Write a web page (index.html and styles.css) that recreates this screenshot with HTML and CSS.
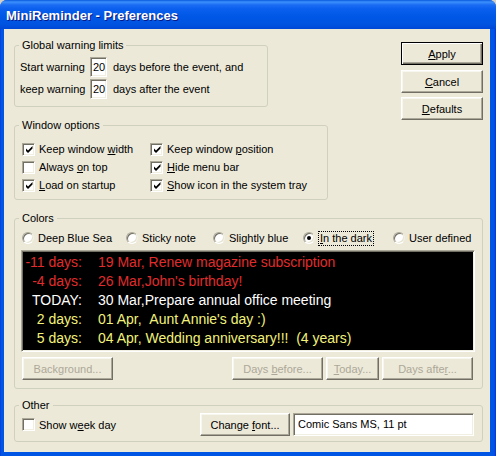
FILE: index.html
```html
<!DOCTYPE html>
<html>
<head>
<meta charset="utf-8">
<title>MiniReminder - Preferences</title>
<link rel="stylesheet" href="styles.css">
</head>
<body>
<div class="window">
  <div class="titlebar"><span class="title">MiniReminder - Preferences</span></div>
  <div class="client">
    <fieldset class="group g-global">
      <legend>Global warning limits</legend>
      <div class="global-body">
        <div class="limit-row"><span class="limit-label">Start warning</span><span class="edit num">20</span><span class="limit-text">days before the event, and</span></div>
        <div class="limit-row"><span class="limit-label">keep warning</span><span class="edit num">20</span><span class="limit-text">days after the event</span></div>
      </div>
    </fieldset>

    <div class="btn-col">
      <button class="btn btn-main default"><span><u>A</u>pply</span></button>
      <button class="btn btn-main"><span><u>C</u>ancel</span></button>
      <button class="btn btn-main"><span><u>D</u>efaults</span></button>
    </div>

    <fieldset class="group g-window">
      <legend>Window options</legend>
      <div class="options-grid">
        <label class="check-item"><span class="checkbox checked"><svg viewBox="0 0 9 9" width="9" height="9"><path d="M1 3.5 L3 5.5 L7.5 1 L7.5 3.5 L3 8 L1 6 Z" fill="#000"/></svg></span><span>Keep window <u>w</u>idth</span></label>
        <label class="check-item"><span class="checkbox checked"><svg viewBox="0 0 9 9" width="9" height="9"><path d="M1 3.5 L3 5.5 L7.5 1 L7.5 3.5 L3 8 L1 6 Z" fill="#000"/></svg></span><span>Keep window <u>p</u>osition</span></label>
        <label class="check-item"><span class="checkbox"></span><span>Always <u>o</u>n top</span></label>
        <label class="check-item"><span class="checkbox checked"><svg viewBox="0 0 9 9" width="9" height="9"><path d="M1 3.5 L3 5.5 L7.5 1 L7.5 3.5 L3 8 L1 6 Z" fill="#000"/></svg></span><span><u>H</u>ide menu bar</span></label>
        <label class="check-item"><span class="checkbox checked"><svg viewBox="0 0 9 9" width="9" height="9"><path d="M1 3.5 L3 5.5 L7.5 1 L7.5 3.5 L3 8 L1 6 Z" fill="#000"/></svg></span><span><u>L</u>oad on startup</span></label>
        <label class="check-item"><span class="checkbox checked"><svg viewBox="0 0 9 9" width="9" height="9"><path d="M1 3.5 L3 5.5 L7.5 1 L7.5 3.5 L3 8 L1 6 Z" fill="#000"/></svg></span><span><u>S</u>how icon in the system tray</span></label>
      </div>
    </fieldset>

    <fieldset class="group g-colors">
      <legend>Colors</legend>
      <div class="colors-body">
        <div class="radio-row">
          <label class="radio-item"><span class="radio"></span><span>Deep Blue Sea</span></label>
          <label class="radio-item"><span class="radio"></span><span>Sticky note</span></label>
          <label class="radio-item"><span class="radio"></span><span>Slightly blue</span></label>
          <label class="radio-item"><span class="radio selected"><span class="dot"></span></span><span class="focus"><u>I</u>n the dark</span></label>
          <label class="radio-item"><span class="radio"></span><span>User defined</span></label>
        </div>
        <div class="preview">
          <div class="pv-line past"><span class="pv-when">-11 days:</span><span>19 Mar, Renew magazine subscription</span></div>
          <div class="pv-line past"><span class="pv-when">-4 days:</span><span>26 Mar,John's birthday!</span></div>
          <div class="pv-line today"><span class="pv-when">TODAY:</span><span>30 Mar,Prepare annual office meeting</span></div>
          <div class="pv-line future"><span class="pv-when">2 days:</span><span>01 Apr, &nbsp;Aunt Annie's day :)</span></div>
          <div class="pv-line future"><span class="pv-when">5 days:</span><span>04 Apr, Wedding anniversary!!! &nbsp;(4 years)</span></div>
          <div class="pv-line later"><span class="pv-when">14 days:</span><span>13 Apr, Dentist appointment</span></div>
        </div>
        <div class="btn-row">
          <button class="btn disabled w-bg"><span>Background...</span></button>
          <span class="spacer"></span>
          <button class="btn disabled w-days"><span>Days <u>b</u>efore...</span></button>
          <button class="btn disabled w-today"><span><u>T</u>oday...</span></button>
          <button class="btn disabled w-days"><span>Days afte<u>r</u>...</span></button>
        </div>
      </div>
    </fieldset>

    <fieldset class="group g-other">
      <legend>Other</legend>
      <div class="other-body">
        <label class="check-item"><span class="checkbox"></span><span>Show w<u>e</u>ek day</span></label>
        <span class="spacer"></span>
        <button class="btn w-font"><span>Change <u>f</u>ont...</span></button>
        <span class="edit font-field">Comic Sans MS, 11 pt</span>
      </div>
    </fieldset>
  </div>
</div>
</body>
</html>
```

FILE: styles.css
```css
* { box-sizing: border-box; }

html, body {
  margin: 0;
  padding: 0;
}

body {
  width: 496px;
  height: 456px;
  overflow: hidden;
  background: #d4d0c8;
  font-family: "Liberation Sans", Arial, sans-serif;
  font-size: 11px;
  color: #000;
}

.window {
  width: 496px;
  height: 456px;
  display: flex;
  flex-direction: column;
  background: linear-gradient(to right, #0831d9 0, #0055e5 1px, #0055e5 calc(100% - 2px), #0831d9 100%);
  border-radius: 7px 7px 0 0;
  overflow: hidden;
}

.titlebar {
  flex: none;
  height: 29px;
  display: flex;
  align-items: center;
  padding: 2px 0 0 6px;
  background: linear-gradient(to bottom, #0a5ae0 0, #3d90fb 2px, #1a6cf3 5px, #0b5fee 9px, #0058e6 16px, #0054e0 24px, #0048d6 29px);
}

.title {
  font-family: "Liberation Sans", Arial, sans-serif;
  font-weight: bold;
  font-size: 13px;
  color: #fff;
  text-shadow: 1px 1px #0a1883;
}

.client {
  flex: 1;
  margin: 0 6px 4px 4px;
  padding: 10px 7px 0 10px;
  background: #ece9d8;
  display: grid;
  grid-template-columns: 1fr 82px;
  grid-template-rows: auto auto auto auto 1fr;
  align-items: start;
}

/* group boxes */
.group {
  margin: 0;
  padding: 0;
  min-width: 0;
  border: 1px solid #d0d0bf;
  border-radius: 3px;
}

.group legend {
  margin-left: 4px;
  padding: 0 3px;
  font-size: 11px;
  line-height: 12px;
  color: #000;
}

.g-global {
  grid-column: 1;
  grid-row: 1;
  width: 254px;
}

.global-body {
  padding: 6px 0 7px 5px;
}

.limit-row {
  display: flex;
  align-items: center;
  height: 20px;
}

.limit-row + .limit-row {
  margin-top: 2px;
}

.limit-label {
  width: 70px;
}

.limit-text {
  margin-left: 6px;
}

.edit {
  display: block;
  background: #fff;
  border: 1px solid;
  border-color: #aca899 #fff #fff #aca899;
  box-shadow: inset 1px 1px #716f64, inset -1px -1px #f1efe2;
}

.num {
  width: 17px;
  height: 20px;
  padding-left: 2px;
  line-height: 18px;
}

/* buttons */
.btn {
  display: flex;
  align-items: center;
  justify-content: center;
  height: 23px;
  padding: 0;
  margin: 0;
  background: #ece9d8;
  border: 1px solid;
  border-color: #fff #716f64 #716f64 #fff;
  box-shadow: inset -1px -1px #aca899, inset 1px 1px #f7f6ef;
  font-family: "Liberation Sans", Arial, sans-serif;
  font-size: 11px;
  color: #000;
  white-space: nowrap;
}

.btn.default {
  border-color: #000;
  box-shadow: inset 1px 1px #fff, inset -1px -1px #716f64, inset -2px -2px #aca899;
}

.btn.disabled {
  color: #aca899;
}

.btn-col {
  grid-column: 2;
  grid-row: 1 / span 2;
  margin-top: 3px;
  display: flex;
  flex-direction: column;
}

.btn-main {
  width: 82px;
}

.btn-main + .btn-main {
  margin-top: 5px;
}

.btn-main:last-child {
  margin-top: 4px;
}

/* window options */
.g-window {
  grid-column: 1;
  grid-row: 2;
  width: 314px;
  margin-top: 12px;
}

.options-grid {
  display: grid;
  grid-template-columns: 128px auto;
  grid-auto-rows: 18px;
  padding: 9px 0 5px 7px;
}

.check-item {
  display: flex;
  align-items: center;
  white-space: nowrap;
}

.checkbox {
  flex: none;
  width: 13px;
  height: 13px;
  margin-right: 4px;
  display: flex;
  align-items: center;
  justify-content: center;
  background: #fff;
  border: 1px solid;
  border-color: #aca899 #fff #fff #aca899;
  box-shadow: inset 1px 1px #716f64, inset -1px -1px #f1efe2;
}

.checkbox svg {
  display: block;
  margin: 1px 0 0 1px;
}

/* colors */
.g-colors {
  grid-column: 1 / span 2;
  grid-row: 3;
  margin-top: 12px;
}

.colors-body {
  padding: 6px 7px 8px 6px;
}

.radio-row {
  display: grid;
  grid-template-columns: 104px 87px 90px 90px auto;
  height: 16px;
  align-items: center;
  padding-left: 1px;
}

.radio-item {
  display: flex;
  align-items: center;
  white-space: nowrap;
}

.radio {
  flex: none;
  position: relative;
  width: 12px;
  height: 12px;
  margin-right: 4px;
  border-radius: 50%;
  background: #fff;
  border: 1px solid;
  border-color: #aca899 #f1efe2 #fff #aca899;
  box-shadow: inset 1px 1px #716f64, inset -1px -1px #e6e3d3;
}

.radio .dot {
  position: absolute;
  left: 3px;
  top: 3px;
  width: 4px;
  height: 4px;
  border-radius: 50%;
  background: #000;
}

.focus {
  border: 1px dotted #000;
  padding: 0 1px;
  line-height: 13px;
  margin-left: -1px;
}

.preview {
  margin-top: 4px;
  width: 454px;
  height: 102px;
  overflow: hidden;
  background: #000;
  border: 1px solid;
  border-color: #aca899 #fff #fff #aca899;
  box-shadow: inset 1px 1px #716f64, inset -1px -1px #f1efe2;
  padding: 2px 0 0 1px;
  font-family: "Liberation Sans", Arial, sans-serif;
  font-size: 14px;
}

.pv-line {
  display: grid;
  grid-template-columns: 59px auto;
  column-gap: 16px;
  line-height: 19px;
  white-space: nowrap;
}

.pv-when {
  text-align: right;
}

.past { color: #e02c2c; }
.today { color: #fff; }
.future { color: #f2f27a; }
.later { color: #c8c8c8; }

.btn-row {
  display: flex;
  margin-top: 5px;
  padding: 0 2px 0 1px;
}

.spacer {
  flex: 1;
}

.w-bg { width: 91px; }
.w-days { width: 91px; }
.w-today { width: 53px; margin: 0 3px; }

/* other */
.g-other {
  grid-column: 1 / span 2;
  grid-row: 4;
  margin-top: 10px;
}

.other-body {
  display: flex;
  align-items: center;
  padding: 2px 8px 5px 7px;
}

.w-font {
  width: 90px;
}

.font-field {
  width: 181px;
  height: 23px;
  margin-left: 3px;
  padding-left: 4px;
  line-height: 21px;
  white-space: nowrap;
}
```
